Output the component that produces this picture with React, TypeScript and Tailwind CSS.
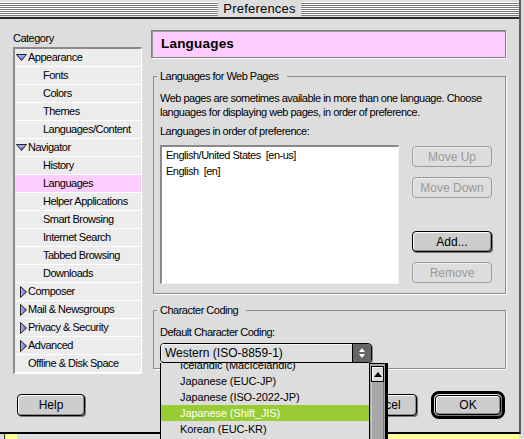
import React from 'react';

const sans = "font-['Liberation_Sans',Arial,sans-serif]";
const body = "font-['Liberation_Sans',Arial,sans-serif] text-[11px] tracking-[-0.5px]";

type Kind = 'open' | 'closed' | 'child' | 'leaf';

const tree: { label: string; kind: Kind; selected?: boolean }[] = [
  { label: 'Appearance', kind: 'open' },
  { label: 'Fonts', kind: 'child' },
  { label: 'Colors', kind: 'child' },
  { label: 'Themes', kind: 'child' },
  { label: 'Languages/Content', kind: 'child' },
  { label: 'Navigator', kind: 'open' },
  { label: 'History', kind: 'child' },
  { label: 'Languages', kind: 'child', selected: true },
  { label: 'Helper Applications', kind: 'child' },
  { label: 'Smart Browsing', kind: 'child' },
  { label: 'Internet Search', kind: 'child' },
  { label: 'Tabbed Browsing', kind: 'child' },
  { label: 'Downloads', kind: 'child' },
  { label: 'Composer', kind: 'closed' },
  { label: 'Mail & Newsgroups', kind: 'closed' },
  { label: 'Privacy & Security', kind: 'closed' },
  { label: 'Advanced', kind: 'closed' },
  { label: 'Offline & Disk Space', kind: 'leaf' },
];

const encodings = [
  'Icelandic (MacIcelandic)',
  'Japanese (EUC-JP)',
  'Japanese (ISO-2022-JP)',
  'Japanese (Shift_JIS)',
  'Korean (EUC-KR)',
  'Korean (ISO-2022-KR)',
];

function Disclosure({ open }: { open: boolean }) {
  if (open) {
    return (
      <svg width="12" height="8" viewBox="0 0 12 8" className="shrink-0">
        <defs>
          <linearGradient id="tri-down" x1="0" y1="0" x2="0" y2="1">
            <stop offset="0" stopColor="#b8b8ff" />
            <stop offset="1" stopColor="#5a5acc" />
          </linearGradient>
        </defs>
        <path d="M0.5 0.5 H10.5 L5.5 6.5 Z" fill="url(#tri-down)" stroke="#222" />
      </svg>
    );
  }
  return (
    <svg width="12" height="12" viewBox="0 0 12 12" className="shrink-0">
      <defs>
        <linearGradient id="tri-right" x1="0" y1="0" x2="1" y2="0">
          <stop offset="0" stopColor="#b8b8ff" />
          <stop offset="1" stopColor="#5a5acc" />
        </linearGradient>
      </defs>
      <path d="M4.5 0.5 V11.5 L10.5 6 Z" fill="url(#tri-right)" stroke="#222" />
    </svg>
  );
}

function Btn({
  children,
  disabled,
  className = '',
}: {
  children: React.ReactNode;
  disabled?: boolean;
  className?: string;
}) {
  return (
    <div
      className={`flex items-center justify-center rounded-[4px] border text-[12px] tracking-normal ${sans} ${
        disabled
          ? 'border-[#9c9c9c] text-[#9a9a9a] bg-[#dddddd] shadow-[inset_1px_1px_0_#ececec]'
          : 'border-black text-black bg-[#cdcdcd] shadow-[inset_1px_1px_0_#fff,inset_-1px_-1px_0_#8c8c8c,1px_1px_0_#7a7a7a]'
      } ${className}`}
    >
      {children}
    </div>
  );
}

function TreeRow({ label, kind, selected }: { label: string; kind: Kind; selected?: boolean }) {
  return (
    <div
      className={`flex items-center h-[18px] border-b border-white whitespace-nowrap ${
        selected ? 'bg-[#ffccff]' : 'bg-[#ececec]'
      }`}
    >
      {kind === 'child' && <span className="pl-[28px]">{label}</span>}
      {kind === 'leaf' && <span className="pl-[13px]">{label}</span>}
      {(kind === 'open' || kind === 'closed') && (
        <>
          <span className="ml-[1px] w-[12px] flex items-center">
            <Disclosure open={kind === 'open'} />
          </span>
          <span>{label}</span>
        </>
      )}
    </div>
  );
}

function EncodingMenu() {
  return (
    <div className="absolute -left-[1px] top-[19px] z-10 w-[228px] h-[80px] flex bg-[#dddddd] border-l border-black border-r-[3px] border-r-black overflow-hidden">
      <div className="flex-1 overflow-hidden">
        <div className={`-mt-[6px] text-[11px] tracking-[-0.1px] ${sans}`}>
          {encodings.map((e) => (
            <div
              key={e}
              className={`h-[16px] leading-[16px] pl-[19px] whitespace-nowrap ${
                e === 'Japanese (Shift_JIS)' ? 'bg-[#99cc33] text-white' : 'text-black'
              }`}
            >
              {e}
            </div>
          ))}
        </div>
      </div>
      <div className="w-[16px] flex flex-col border-l border-t border-black bg-[#a8a8a8]">
        <div className="h-[16px] mt-[2px] mx-[1px] flex items-center justify-center bg-[#dddddd] border border-black shadow-[inset_1px_1px_0_#fff]">
          <svg width="8" height="5" viewBox="0 0 8 5">
            <path d="M0 5 L4 0 L8 5 Z" fill="#000" />
          </svg>
        </div>
        <div className="flex-1 mx-[1px] bg-[#a8a8a8] shadow-[inset_1px_0_0_#c8c8c8,inset_-1px_0_0_#777]" />
      </div>
    </div>
  );
}

export default function App() {
  return (
    <div className={`relative w-[524px] h-[439px] overflow-hidden bg-[#dcdcdc] text-black ${body}`}>
      <div className="w-[521px] h-[434px] flex flex-col bg-[#dddddd] border-r-2 border-r-[#5c5c5c] border-b-2 border-b-black">
        {/* title bar */}
        <div className="h-[19px] shrink-0 flex items-center border-b-2 border-[#2a2a2a] bg-[#dddddd]">
          <div className="flex-1 h-[14px] bg-[repeating-linear-gradient(to_bottom,#ffffff_0px,#ffffff_1px,#7a7a7a_1px,#7a7a7a_2px)]" />
          <div className={`px-[5px] text-[13px] leading-[17px] tracking-[0.2px] ${sans}`}>Preferences</div>
          <div className="flex-1 h-[14px] bg-[repeating-linear-gradient(to_bottom,#ffffff_0px,#ffffff_1px,#7a7a7a_1px,#7a7a7a_2px)]" />
        </div>

        <div className="flex gap-[9px] pl-[13px] pt-[11px]">
          {/* category */}
          <div className="w-[129px] flex flex-col">
            <div className="h-[17px] leading-[17px]">Category</div>
            <div className="border-t-2 border-l-2 border-[#8a8a8a] border-r border-b border-r-white border-b-white">
              {tree.map((r) => (
                <TreeRow key={r.label + r.kind} {...r} />
              ))}
            </div>
          </div>

          {/* panel */}
          <div className="w-[355px] flex flex-col">
            <div
              className={`h-[28px] flex items-center pl-[9px] bg-[#ffccff] border border-[#7f7f7f] shadow-[inset_1px_1px_0_#9a9a9a,1px_1px_0_#ffffff] font-bold text-[13.5px] tracking-[0.2px] ${sans}`}
            >
              Languages
            </div>

            <fieldset className="mt-[12px] ml-[2px] w-[353px] min-w-0 border border-[#8c8c8c] shadow-[1px_1px_0_#ffffff]">
              <legend className="ml-[3px] pl-[3px] pr-[8px] leading-[13px]">Languages for Web Pages</legend>
              <div className="px-[6px] pt-[8px] pb-[9px]">
                <div className="leading-[14px] whitespace-nowrap">
                  Web pages are sometimes available in more than one language. Choose
                </div>
                <div className="leading-[14px] whitespace-nowrap">
                  languages for displaying web pages, in order of preference.
                </div>
                <div className="mt-[5px] leading-[14px]">Languages in order of preference:</div>
                <div className="mt-[7px] flex gap-[13px]">
                  <div className="w-[239px] h-[139px] bg-white border-t-2 border-l-2 border-[#8a8a8a] border-r border-b border-r-[#f4f4f4] border-b-[#f4f4f4] pl-[4px]">
                    <div className="h-[16px] leading-[16px] whitespace-pre">English/United States  [en-us]</div>
                    <div className="h-[16px] leading-[16px] whitespace-pre">English  [en]</div>
                  </div>
                  <div className="w-[80px] flex flex-col justify-between py-[1px]">
                    <div className="flex flex-col gap-[10px]">
                      <Btn disabled className="h-[21px]">Move Up</Btn>
                      <Btn disabled className="h-[21px]">Move Down</Btn>
                    </div>
                    <div className="flex flex-col gap-[10px]">
                      <Btn className="h-[21px]">Add...</Btn>
                      <Btn disabled className="h-[21px]">Remove</Btn>
                    </div>
                  </div>
                </div>
              </div>
            </fieldset>

            <fieldset className="mt-[10px] ml-[2px] w-[353px] min-w-0 border border-[#8c8c8c] shadow-[1px_1px_0_#ffffff]">
              <legend className="ml-[3px] pl-[3px] pr-[8px] leading-[13px]">Character Coding</legend>
              <div className="px-[6px] pt-[8px] pb-[5px]">
                <div className="leading-[14px]">Default Character Coding:</div>
                <div className="relative mt-[4px] w-[212px] h-[20px] flex rounded-[4px] border border-black bg-[#dedede] shadow-[1px_1px_0_#8a8a8a]">
                  <div
                    className={`flex-1 flex items-center pl-[4px] text-[12px] tracking-normal rounded-l-[3px] shadow-[inset_1px_1px_0_#f4f4f4] ${sans}`}
                  >
                    Western (ISO-8859-1)
                  </div>
                  <div className="w-[19px] flex flex-col items-center justify-center gap-[2px] bg-[#666666] border-l border-black rounded-r-[3px]">
                    <svg width="6" height="4" viewBox="0 0 6 4">
                      <path d="M0 4 L3 0 L6 4 Z" fill="#fff" />
                    </svg>
                    <svg width="6" height="4" viewBox="0 0 6 4">
                      <path d="M0 0 L3 4 L6 0 Z" fill="#fff" />
                    </svg>
                  </div>
                  <EncodingMenu />
                </div>
              </div>
            </fieldset>
          </div>
        </div>

        {/* dialog buttons */}
        <div className="mt-[17px] h-[28px] flex items-center pl-[17px] pr-[14px]">
          <Btn className="w-[68px] h-[22px]">Help</Btn>
          <div className="flex-1" />
          <Btn className="w-[70px] h-[22px]">Cancel</Btn>
          <div className="ml-[14px] p-[1px] rounded-[8px] border-[3px] border-black bg-[#dddddd]">
            <Btn className="w-[66px] h-[20px]">OK</Btn>
          </div>
        </div>
      </div>

      {/* window behind */}
      <div className="flex h-[5px] w-[524px]">
        <div className="ml-[4px] w-[1px] bg-[#444444]" />
        <div className="ml-[1px] w-[11px] bg-[#ffff99]" />
        <div className="flex-1" />
        <div className="w-[180px] mr-[5px] bg-[#ffff99]" />
      </div>

      {/* pointer */}
      <svg className="absolute left-[294px] top-[413px]" width="12" height="18" viewBox="0 0 12 18">
        <path d="M0.5 0.5 V14.5 L4 11 L6.5 16.5 L8.5 15.5 L6 10.5 H10.5 Z" fill="#000" stroke="#fff" strokeWidth="1" />
      </svg>
    </div>
  );
}
